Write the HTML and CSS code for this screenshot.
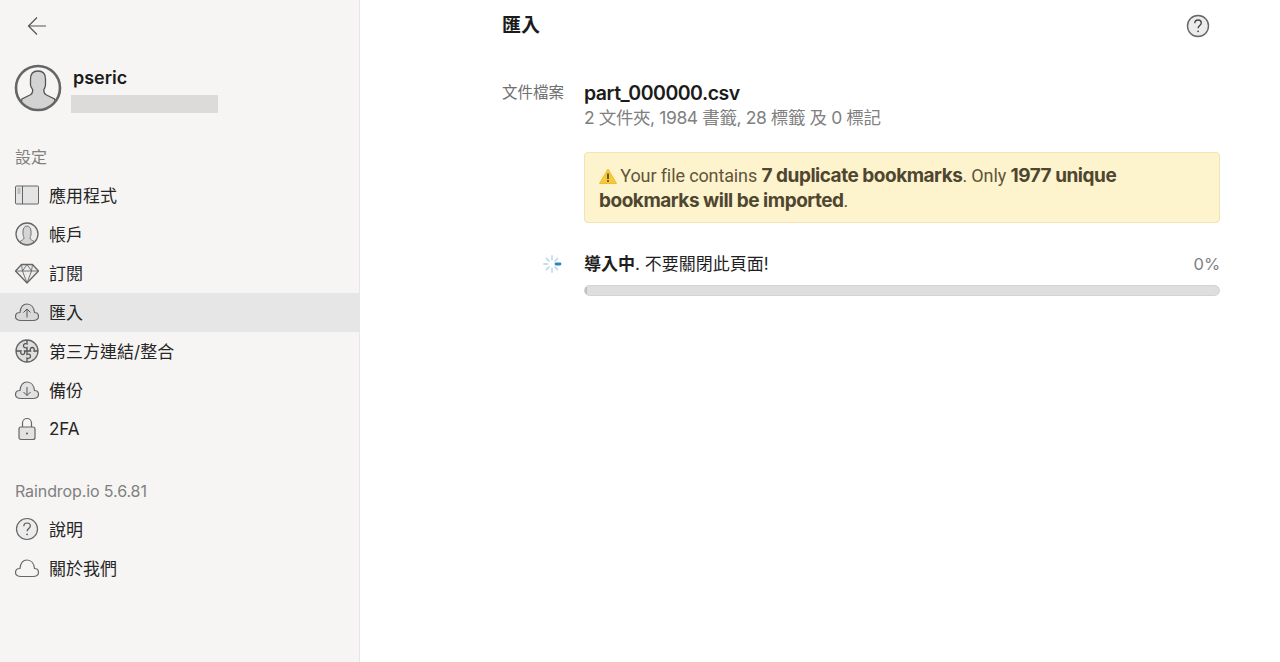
FILE: index.html
```html
<!DOCTYPE html>
<html lang="zh-Hant">
<head>
<meta charset="utf-8">
<title>匯入</title>
<link rel="stylesheet" href="styles.css">
</head>
<body>
<div class="app">
  <aside class="sidebar">
    <div class="back">
      <svg width="24" height="24" viewBox="0 0 24 24" fill="none" stroke="#555" stroke-width="1.2"><path d="M21 12H4M12 3.5 3.5 12l8.5 8.5"/></svg>
    </div>
    <div class="user">
      <svg class="avatar" width="48" height="48" viewBox="0 0 48 48"><defs><clipPath id="ac"><circle cx="24" cy="24" r="21.5"/></clipPath></defs><g clip-path="url(#ac)"><path d="M16.500 15c0-6 3-8 7.500-8s7.500 2 7.500 8v6c0 2-1 3-1.500 4.500-.5 2 0 4 2.500 5.500l8 4 3 12H5l3-12 8-4c2.500-1.500 3-3.500 2.500-5.500C18 24 16.500 23 16.500 21z" fill="#d3d3d3" stroke="#555" stroke-width="1.300"/></g><circle cx="24" cy="24" r="22" fill="none" stroke="#666" stroke-width="2.600"/></svg>
      <div class="user-text">
        <div class="user-name">pseric</div>
        <div class="user-mask"></div>
      </div>
    </div>
    <div class="section-title first">設定</div>
    <nav class="menu">
      <a class="item">
        <svg class="icon" width="24" height="24" viewBox="0 0 24 24"><rect x=".5" y="3" width="23" height="18" rx="1" fill="#e4e4e4" stroke="#666"/><path d="M7.500 3v18" stroke="#666"/><path d="M2.500 6h3M2.500 8h3M2.500 10h3" stroke="#888" stroke-width=".8"/></svg>
        <span>應用程式</span>
      </a>
      <a class="item">
        <svg class="icon" width="24" height="24" viewBox="0 0 24 24"><circle cx="12" cy="12" r="11" fill="#ececec" stroke="#666" stroke-width="1.300"/><path d="M8 9c0-3 2-5 4-5s4 2 4 5v3c0 2-1 3-1 4 0 1.500 2 2 4 3.500C17 21.500 14.500 22.500 12 22.500S7 21.500 5 19.500c2-1.500 4-2 4-3.500 0-1-1-2-1-4z" fill="#d5d5d5" stroke="#666" stroke-width=".9"/></svg>
        <span>帳戶</span>
      </a>
      <a class="item">
        <svg class="icon" width="24" height="24" viewBox="0 0 24 24"><path d="M6.500 3.500h11L23.500 10 12 22 .5 10z" fill="#ececec" stroke="#666" stroke-width="1.300" stroke-linejoin="round"/><path d="M.5 10h23M7.500 10 12 22 16.500 10 12 3.500zM6.500 3.500l1 6.500M17.500 3.500l-1 6.500" fill="none" stroke="#666" stroke-width=".9"/></svg>
        <span>訂閱</span>
      </a>
      <a class="item active">
        <svg class="icon" width="24" height="24" viewBox="0 0 24 24"><path d="M6 20.500C3 20.500.500 19 .500 16.500S2.500 12.500 5 12.500C5.500 7.500 8 4 12 4s7 3.500 7.500 8.500c2.500 0 4 1.500 4 4s-2.500 4-5.500 4z" fill="#d9d9d9" stroke="#666" stroke-width="1.200"/><path d="M12 17.500V9M8.500 12.500 12 9l3.500 3.500" fill="none" stroke="#555"/></svg>
        <span>匯入</span>
      </a>
      <a class="item">
        <svg class="icon" width="24" height="24" viewBox="0 0 24 24"><circle cx="12" cy="12" r="11" fill="#dedede" stroke="#666" stroke-width="1.300"/><path d="M12 1v4c-2-.8-3.500 0-3.500 1.700S10 9.300 12 8.500V12H9.500c.8 2-.2 3.500-1.800 3.500S5.200 14 6 12H1M12 12h3.500c-.8-2 .2-3.500 1.800-3.500s2.500 1.500 1.700 3.500h4M12 12v3.500c2-.8 3.500 0 3.500 1.700S14 19.800 12 19v4" fill="none" stroke="#555" stroke-width="1.300"/></svg>
        <span>第三方連結/整合</span>
      </a>
      <a class="item">
        <svg class="icon" width="24" height="24" viewBox="0 0 24 24"><path d="M6 20.500C3 20.500.500 19 .500 16.500S2.500 12.500 5 12.500C5.500 7.500 8 4 12 4s7 3.500 7.500 8.500c2.500 0 4 1.500 4 4s-2.500 4-5.500 4z" fill="#e2e2e2" stroke="#666" stroke-width="1.200"/><path d="M12 9v8.500M8.500 14l3.500 3.500 3.500-3.500" fill="none" stroke="#555"/></svg>
        <span>備份</span>
      </a>
      <a class="item">
        <svg class="icon" width="24" height="24" viewBox="0 0 24 24"><rect x="4" y="10" width="16" height="12.500" rx="2" fill="#e2e2e2" stroke="#666" stroke-width="1.200"/><path d="M7.500 10V6a4.500 4.500 0 0 1 9 0v4" fill="none" stroke="#666" stroke-width="1.200"/><circle cx="12" cy="16.500" r="1" fill="#555"/></svg>
        <span>2FA</span>
      </a>
    </nav>
    <div class="section-title second">Raindrop.io 5.6.81</div>
    <nav class="menu">
      <a class="item">
        <svg class="icon" width="24" height="24" viewBox="0 0 24 24"><circle cx="12" cy="12" r="10.500" fill="#ececec" stroke="#666" stroke-width="1.200"/><path d="M8.800 9.300c0-2 1.500-3.300 3.300-3.300s3.200 1.200 3.200 2.900c0 2.500-3.200 2.700-3.200 5.300" fill="none" stroke="#555" stroke-width="1.200"/><circle cx="12.100" cy="17.300" r=".9" fill="#555"/></svg>
        <span>說明</span>
      </a>
      <a class="item">
        <svg class="icon" width="24" height="24" viewBox="0 0 24 24"><path d="M6 20.500C3 20.500.500 19 .500 16.500S2.500 12.500 5 12.500C5.500 7.500 8 4 12 4s7 3.500 7.500 8.500c2.500 0 4 1.500 4 4s-2.500 4-5.500 4z" fill="none" stroke="#666" stroke-width="1.200"/></svg>
        <span>關於我們</span>
      </a>
    </nav>
  </aside>
  <main class="main">
    <header class="head">
      <h1 class="title">匯入</h1>
      <svg width="24" height="24" viewBox="0 0 24 24"><circle cx="12" cy="12" r="10.500" fill="#ececec" stroke="#666" stroke-width="1.400"/><path d="M8.800 9.300c0-2 1.500-3.300 3.300-3.300s3.200 1.200 3.200 2.900c0 2.500-3.200 2.700-3.200 5.300" fill="none" stroke="#444" stroke-width="1.300"/><circle cx="12.100" cy="17.300" r=".9" fill="#444"/></svg>
    </header>
    <section class="row file-row">
      <div class="label">文件檔案</div>
      <div class="value">
        <div class="file-name">part_000000.csv</div>
        <div class="file-meta">2 文件夾, 1984 書籤, 28 標籤 及 0 標記</div>
      </div>
    </section>
    <section class="row alert-row">
      <div class="label"></div>
      <div class="alert">
        <div><svg class="warn" width="18" height="16" viewBox="0 0 18 16"><path d="M9 1 17.500 15.500H.500z" fill="#f6c93a" stroke="#f0bd2c" stroke-linejoin="round"/><path d="M9 5.500v5.500" stroke="#3a3320" stroke-width="1.500"/><circle cx="9" cy="13" r=".9" fill="#3a3320"/></svg> Your file contains <b>7 duplicate bookmarks</b>. Only <b>1977 unique</b></div>
        <div><b>bookmarks will be imported</b>.</div>
      </div>
    </section>
    <section class="row progress-row">
      <div class="label spin">
        <svg width="20" height="20" viewBox="0 0 20 20" stroke-linecap="round" stroke-width="1.800">
          <path d="M14 10h4" stroke="#2f86b8" stroke-width="2.800"/>
          <path d="M13 7l2.500-2.500M10 5.500V2M7 7 4.500 4.500M5.500 10H2M7 13l-2.500 2.500M10 14.500V18M13 13l2.500 2.500" stroke="#c6deec"/>
        </svg>
      </div>
      <div class="value">
        <div class="progress-text">
          <span><b>導入中</b>. 不要關閉此頁面!</span>
          <span class="percent">0%</span>
        </div>
        <div class="bar"><div class="bar-fill" style="width:0.3%"></div></div>
      </div>
    </section>
  </main>
</div>
</body>
</html>
```
FILE: styles.css
```css
* { box-sizing: border-box; }
html, body { margin: 0; height: 100%; }
body {
  font-family: Inter, "Noto Sans CJK TC", sans-serif;
  color: #1f1f1f;
  background: #fff;
  overflow: hidden;
}
.app { display: flex; height: 662px; }
.sidebar {
  width: 360px;
  flex: none;
  background: #f6f5f3;
  border-right: 1px solid #e6e6e6;
}
.back { height: 52px; padding: 14px 0 0 25px; }
.back svg { display: block; }
.user { display: flex; gap: 11px; padding: 13px 0 0 15px; height: 74px; }
.avatar { flex: none; margin-top: -1px; margin-left: -1px; }
.user-text { display: flex; flex-direction: column; }
.user-name { font-size: 18px; font-weight: 600; line-height: 24px; color: #1b1b1b; margin-top: 1px; }
.user-mask { width: 147px; height: 18px; background: #dcdbd9; margin-top: 5px; margin-left: -2px; }
.section-title { font-size: 16px; color: #808080; padding-left: 15px; line-height: 24px; letter-spacing: -0.1px; }
.section-title.first { margin-top: 19px; }
.section-title.second { margin-top: 30px; }
.menu { display: flex; flex-direction: column; margin-top: 7px; }
.item {
  display: flex;
  align-items: center;
  gap: 10px;
  height: 39px;
  padding: 0 0 2px 15px;
  font-size: 17px;
  color: #262626;
}
.item.active { background: #e6e6e6; }
.icon { flex: none; }
.main { flex: 1; padding: 0 60px 0 142px; }
.head { display: flex; justify-content: space-between; align-items: center; height: 52px; padding-right: 10px; }
.title { margin: 0; font-size: 19px; font-weight: 700; line-height: 56px; color: #1b1b1b; }
.row { display: flex; gap: 20px; }
.label { width: 62px; flex: none; font-size: 15.500px; color: #6f6f6f; white-space: nowrap; }
.value { flex: 1; min-width: 0; }
.file-row { margin-top: 28px; }
.file-row .label { line-height: 26px; }
.file-name { font-size: 19.500px; font-weight: 600; line-height: 26px; color: #1b1b1b; letter-spacing: -0.5px; }
.file-meta { font-size: 17.500px; line-height: 24px; color: #808080; letter-spacing: -0.4px; }
.alert-row { margin-top: 22px; }
.alert {
  flex: 1;
  height: 71px;
  padding: 10px 14px;
  background: #fdf3cd;
  border: 1px solid #f0e3b4;
  border-radius: 4px;
  font-family: Roboto, "Noto Sans CJK TC", sans-serif;
  font-size: 18px;
  line-height: 25px;
  letter-spacing: -0.12px;
  color: #5f553a;
}
.alert b { font-family: Inter, "Noto Sans CJK TC", sans-serif; font-size: 19px; font-weight: 700; color: #4f4630; letter-spacing: -0.48px; }
.warn { vertical-align: -2px; margin-right: -1px; }
.progress-row { margin-top: 27px; }
.spin { display: flex; justify-content: flex-end; padding-top: 4px; padding-right: 2px; }
.progress-text { display: flex; justify-content: space-between; font-size: 17px; line-height: 28px; color: #1f1f1f; }
.progress-text b { font-weight: 600; }
.percent { color: #808080; font-size: 16.500px; letter-spacing: -0.1px; }
.bar { height: 11px; margin-top: 7px; background: #dedede; border: 1px solid #d3d3d3; border-radius: 6px; overflow: hidden; }
.bar-fill { height: 100%; background: #bcbcbc; }
```
